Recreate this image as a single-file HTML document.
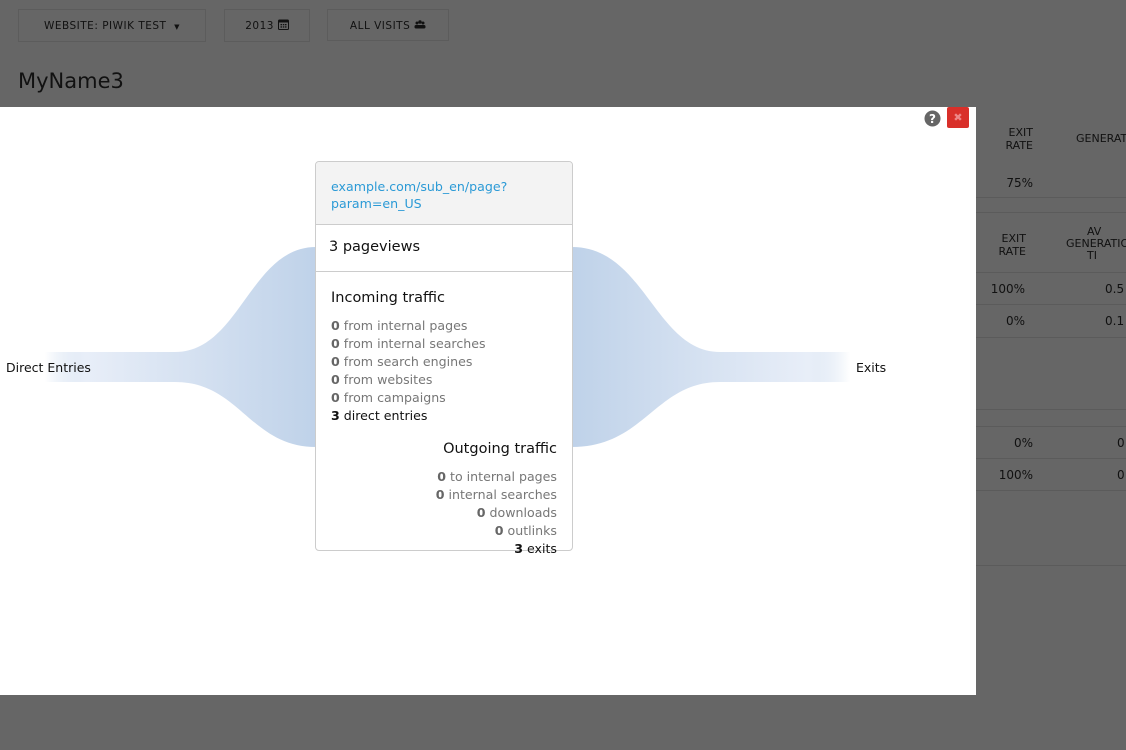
<!DOCTYPE html>
<html><head><meta charset="utf-8"><style>
*{margin:0;padding:0;box-sizing:border-box}
body{width:1126px;height:750px;overflow:hidden;background:#666;font-family:"DejaVu Sans","Liberation Sans",sans-serif;position:relative;color:#111}
.a{position:absolute}
.btn{position:absolute;top:9px;height:33px;border:1px solid #5c5c5c;font-size:10.5px;letter-spacing:.5px;color:#111;text-align:center;line-height:33px}
.r{position:absolute;font-size:12px;color:#111;text-align:right}
.hl{position:absolute;left:976px;width:150px;height:1px;background:#5b5b5b}
.modal{position:absolute;left:0;top:107px;width:976px;height:588px;background:#fff}
.card{position:absolute;left:315px;top:161px;width:258px;height:390px;border:1px solid #ccc;border-radius:4px;background:#fff}
.g{color:#777;font-size:12.6px;line-height:18px}
.g b{color:#666}
</style></head><body>
<div class="btn" style="left:18px;width:188px">WEBSITE: PIWIK TEST &nbsp;<span style="font-size:7px">▼</span></div>
<div class="btn" style="left:224px;width:86px">2013 <svg width="11" height="11" viewBox="0 0 11 11" style="vertical-align:-1px"><rect x="0.5" y="1" width="10" height="9.5" rx="1" fill="none" stroke="#111"/><rect x="0.5" y="1" width="10" height="2.5" fill="#111"/><g fill="#111"><rect x="2.5" y="5" width="1.5" height="1.3"/><rect x="4.8" y="5" width="1.5" height="1.3"/><rect x="7" y="5" width="1.5" height="1.3"/><rect x="2.5" y="7.3" width="1.5" height="1.3"/><rect x="4.8" y="7.3" width="1.5" height="1.3"/><rect x="7" y="7.3" width="1.5" height="1.3"/></g></svg></div>
<div class="btn" style="left:327px;width:122px;height:32px">ALL VISITS <svg width="12" height="9" viewBox="0 0 12 9"><g fill="#111"><circle cx="3" cy="3" r="1.5"/><circle cx="6" cy="2" r="1.7"/><circle cx="9" cy="3" r="1.5"/><rect x="0.5" y="5" width="11" height="3.5" rx="1.5"/></g></svg></div>
<div class="a" style="left:18px;top:69px;font-size:21px;color:#111">MyName3</div>

<div class="r" style="left:990px;top:126px;width:43px;line-height:13px;font-size:11px">EXIT<br>RATE</div>
<div class="a" style="left:1076px;top:132px;font-size:11px;line-height:13px">GENERAT</div>
<div class="hl" style="top:197px"></div>
<div class="r" style="left:990px;top:176px;width:43px">75%</div>
<div class="hl" style="top:212px"></div>
<div class="r" style="left:990px;top:232px;width:36px;line-height:13px;font-size:11px">EXIT<br>RATE</div>
<div class="a" style="left:1066px;top:226px;font-size:11px;line-height:12px">&nbsp;&nbsp;&nbsp;&nbsp;&nbsp;&nbsp;AV<br>GENERATIO<br>&nbsp;&nbsp;&nbsp;&nbsp;&nbsp;&nbsp;TI</div>
<div class="hl" style="top:272px"></div>
<div class="r" style="left:980px;top:282px;width:45px">100%</div>
<div class="a" style="left:1105px;top:282px;font-size:12px">0.5</div>
<div class="hl" style="top:304px"></div>
<div class="r" style="left:980px;top:314px;width:45px">0%</div>
<div class="a" style="left:1105px;top:314px;font-size:12px">0.1</div>
<div class="hl" style="top:337px"></div>
<div class="hl" style="top:409px"></div>
<div class="hl" style="top:426px"></div>
<div class="r" style="left:980px;top:436px;width:53px">0%</div>
<div class="a" style="left:1117px;top:436px;font-size:12px">0</div>
<div class="hl" style="top:458px"></div>
<div class="r" style="left:980px;top:468px;width:53px">100%</div>
<div class="a" style="left:1117px;top:468px;font-size:12px">0</div>
<div class="hl" style="top:490px"></div>
<div class="hl" style="top:565px"></div>

<div class="modal">
<svg class="a" style="left:0;top:0" width="976" height="588">
<defs>
<linearGradient id="l" x1="0" x2="1"><stop offset="0" stop-color="#c0d3ea" stop-opacity="0"/><stop offset="0.15" stop-color="#e8eef8"/><stop offset="1" stop-color="#bfd2e9"/></linearGradient>
<linearGradient id="rg" x1="1" x2="0"><stop offset="0" stop-color="#c0d3ea" stop-opacity="0"/><stop offset="0.15" stop-color="#e8eef8"/><stop offset="1" stop-color="#bfd2e9"/></linearGradient>
</defs>
<path d="M45 245 L175 245 C240 245 250 140 316 140 L316 340 C250 340 240 275 175 275 L45 275 Z" fill="url(#l)"/>
<path d="M850 245 L720 245 C655 245 645 140 572 140 L572 340 C645 340 655 275 720 275 L850 275 Z" fill="url(#rg)"/>
</svg>
<div class="a" style="left:6px;top:253px;font-size:12.5px">Direct Entries</div>
<div class="a" style="left:856px;top:253px;font-size:12.5px">Exits</div>
<svg class="a" style="left:924px;top:3px" width="17" height="17" viewBox="0 0 17 17"><circle cx="8.5" cy="8.5" r="8" fill="#666"/><text x="8.5" y="13" font-size="12" font-weight="bold" fill="#fff" text-anchor="middle" font-family="DejaVu Sans">?</text></svg>
<div class="a" style="left:947px;top:0px;width:22px;height:21px;background:#d9302a;border-radius:2px;color:#e88;font-size:11px;text-align:center;line-height:21px;font-weight:bold">✖</div>
</div>

<div class="card">
<div style="height:63px;background:#f3f3f3;border-bottom:1px solid #ccc;border-radius:4px 4px 0 0;padding:16px 15px;color:#2b9ad6;font-size:12.6px;line-height:17px">example.com/sub_en/page?<br>param=en_US</div>
<div style="height:47px;border-bottom:1px solid #ccc;padding:14px 13px;font-size:14.5px;color:#111">3 pageviews</div>
<div style="padding:16px 15px 0">
<div style="font-size:14.5px;line-height:20px;margin-bottom:9px">Incoming traffic</div>
<div class="g"><b>0</b> from internal pages<br><b>0</b> from internal searches<br><b>0</b> from search engines<br><b>0</b> from websites<br><b>0</b> from campaigns<br><span style="color:#111"><b style="color:#111">3</b> direct entries</span></div>
<div style="font-size:14.5px;line-height:20px;margin:14px 0 9px;text-align:right">Outgoing traffic</div>
<div class="g" style="text-align:right"><b>0</b> to internal pages<br><b>0</b> internal searches<br><b>0</b> downloads<br><b>0</b> outlinks<br><span style="color:#111"><b style="color:#111">3</b> exits</span></div>
</div>
</div>
</body></html>
